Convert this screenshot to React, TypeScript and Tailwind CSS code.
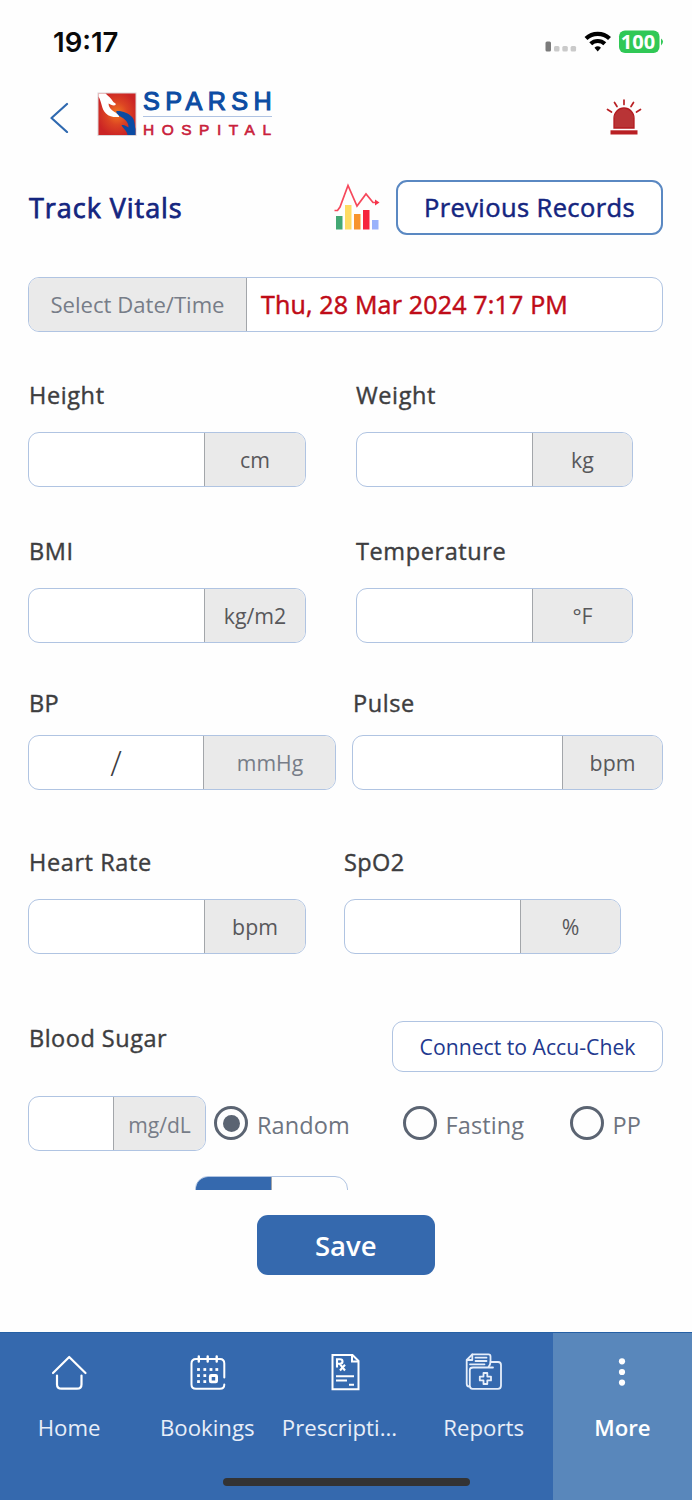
import type { ReactNode } from "react";

type VitalProps = {
  label: string;
  unit: string;
  className: string;
  unitClass: string;
  labelClass: string;
  children?: ReactNode;
};

function Vital({ label, unit, className, unitClass, labelClass, children }: VitalProps) {
  return (
    <div className={`flex flex-col ${className}`}>
      <label className={`flex items-center whitespace-nowrap text-[23.5px] text-[#3d3d3f] [-webkit-text-stroke:0.4px_#3d3d3f] ${labelClass}`}>
        {label}
      </label>
      <div className="flex h-[55px] overflow-hidden rounded-[11px] border-[1.5px] border-[#b0c4e2] bg-white">
        <div className="flex flex-1 items-center justify-center pt-0.5 text-[34px] font-light text-[#3d3d3f]">{children}</div>
        <div className={`flex items-center justify-center border-l-[1.5px] border-[#a3a6aa] bg-[#eaeaea] ${unitClass}`}>
          {unit}
        </div>
      </div>
    </div>
  );
}

function Radio({ label, checked, className }: { label: string; checked?: boolean; className: string }) {
  return (
    <div className={`flex h-full items-center ${className}`}>
      <span className="-mt-px flex size-[34px] shrink-0 items-center justify-center rounded-full border-[3.2px] border-[#5b6472]">
        {checked && <span className="size-[17px] rounded-full bg-[#5b6472]" />}
      </span>
      <span className="ml-[9px] whitespace-nowrap pt-1 text-[23.5px] tracking-[0.1px] text-[#6e7480]">{label}</span>
    </div>
  );
}

function Logo() {
  return (
    <div className="flex">
      <svg width="40" height="45" viewBox="0 0 40 45">
        <defs>
          <radialGradient id="glow" cx="0.5" cy="0.48" r="0.55">
            <stop offset="0" stopColor="#f27a22" />
            <stop offset="0.5" stopColor="#dc4423" />
            <stop offset="1" stopColor="#cb2425" />
          </radialGradient>
        </defs>
        <rect x="0.5" y="0.5" width="39" height="43.5" fill="#dcd6d8" />
        <rect x="1.5" y="1.5" width="37" height="41.5" fill="url(#glow)" />
        <path d="M1.500 1.500H8.500C11.500 4 14 6.500 16 9.500C17.500 11.500 19.500 11 18.500 13C16.500 14.500 13 12 11.500 11.500C11.500 15 14 18 17.500 20C20 21.500 22.800 23.500 22 25C17 25.500 12 24.500 9 21.500C4.500 17.500 5 10.500 1.500 4.500Z" fill="#fff" />
        <path d="M19.500 19C25 18.500 31.500 21 35 25C38 28.500 37.500 33 38.500 37V43H30.500C30 39 26.500 36.500 24.500 33.500C26.500 32 29.500 34.500 31.500 35.500C32 31 28 27 24 25C21.500 23.500 18.500 20.500 19.500 19Z" fill="#0b4ba3" />
      </svg>
      <div className="ml-1.5 flex w-[136px] flex-col font-['Liberation_Sans',sans-serif]">
        <span className="h-[24px] whitespace-nowrap text-[25.2px] leading-[19px] tracking-[5.4px] text-[#0c4ca3] [-webkit-text-stroke:1.1px_#0c4ca3]">SPARSH</span>
        <span className="h-px w-[129px] bg-[#b0c3e2]" />
        <span className="mt-[7px] whitespace-nowrap text-[15.5px] leading-[12px] tracking-[7.5px] text-[#c9203a] [-webkit-text-stroke:0.6px_#c9203a]">HOSPITAL</span>
      </div>
    </div>
  );
}

function StatusIcons() {
  return (
    <svg width="122" height="30" viewBox="542 27 122 30">
      <rect x="545.5" y="41.5" width="5.5" height="10" rx="1.5" fill="#7b7b7b" />
      <rect x="554" y="46" width="5.5" height="5.5" rx="1.5" fill="#cacaca" />
      <rect x="562.3" y="46" width="5.5" height="5.5" rx="1.5" fill="#cacaca" />
      <rect x="570.6" y="46" width="5.5" height="5.5" rx="1.5" fill="#cacaca" />
      <g fill="none" stroke="#000" strokeWidth="4.2">
        <path d="M586 38.500A17 17 0 0 1 609.500 38.500" />
        <path d="M590.700 43.800A10.300 10.300 0 0 1 604.800 43.800" />
      </g>
      <path d="M594.500 47.700Q597.700 45 601 47.700L597.700 51.500Z" fill="#000" />
      <rect x="619" y="30.5" width="40.5" height="22.5" rx="6" fill="#30c856" />
      <path d="M661 38.500Q665 41.500 661 45.500Z" fill="#30c856" />
      <text x="638" y="49" textAnchor="middle" className="font-['Open_Sans',sans-serif] text-[20px] font-bold" fill="#fff">100</text>
    </svg>
  );
}

function Siren() {
  return (
    <svg width="36" height="38" viewBox="0 0 36 38">
      <path d="M8 29V19A10 10 0 0 1 28 19V29Z" fill="#b93436" stroke="#b41b20" strokeWidth="1.3" />
      <rect x="4.5" y="31.3" width="27" height="4.2" fill="#b92024" />
      <g stroke="#b92024" strokeWidth="1.7" strokeLinecap="round">
        <path d="M18 1V5.500M8.500 3.500L11 7.500M27.500 3.500L25 7.500M1.500 10.500L5.500 13M34.500 10.500L30.500 13" />
      </g>
    </svg>
  );
}

function ChartIcon() {
  return (
    <svg width="46" height="48" viewBox="0 0 46 48">
      <rect x="2" y="34" width="6.5" height="13.5" fill="#43a874" />
      <rect x="11" y="23" width="6.5" height="24.5" fill="#fedb63" />
      <rect x="20" y="32" width="6.5" height="15.5" fill="#f7942d" />
      <rect x="29" y="28" width="6.5" height="19.5" fill="#f6243c" />
      <rect x="38" y="38" width="6.5" height="9.5" fill="#98b2fb" />
      <path d="M0.500 28.500H3.500L6 25L14 3.500L23 24L32 12L39 20.500H43" fill="none" stroke="#f6485b" strokeWidth="1.7" />
      <path d="M41 17.500L45.500 20.500L41 23.500Z" fill="#f6344a" />
    </svg>
  );
}

function HomeIcon() {
  return (
    <svg width="38" height="40" viewBox="50 1353 38 40" fill="none" stroke="#fff" strokeWidth="2.2" strokeLinecap="round" strokeLinejoin="round">
      <path d="M53 1373L69.200 1357L85.500 1373" />
      <path d="M57 1375.500V1384.500Q57 1388.700 61.500 1388.700H77Q81.500 1388.700 81.500 1384.500V1375.500" />
    </svg>
  );
}

const calendarDots = [
  [199, 1369.5], [205.3, 1369.5], [211.5, 1369.5], [217.3, 1369.5],
  [199, 1375.6], [205.3, 1375.6],
  [199, 1381.6], [205.3, 1381.6],
];

function BookingsIcon() {
  return (
    <svg width="38" height="40" viewBox="188.5 1353 38 40" fill="none" stroke="#fff" strokeWidth="2" strokeLinecap="round">
      <path d="M224.800 1377.500V1363.500Q224.800 1359 220.500 1359H196.500Q192 1359 192 1363.500V1384.500Q192 1388.800 196.500 1388.800H220.500Q224.800 1388.800 224.800 1384.500" />
      <path d="M199.300 1356.500V1361.500M208.200 1356.500V1361.500M217.200 1356.500V1361.500" strokeWidth="2.4" />
      {calendarDots.map(([x, y]) => (
        <rect key={`${x}-${y}`} x={x - 1.4} y={y - 1.4} width="2.8" height="2.8" fill="#fff" stroke="none" />
      ))}
      <rect x="210.8" y="1375.5" width="6.3" height="6.3" rx="0.8" strokeWidth="2.8" />
    </svg>
  );
}

function PrescriptionIcon() {
  return (
    <svg width="38" height="40" viewBox="326.5 1353 38 40" fill="none" stroke="#fff" strokeWidth="2">
      <path d="M333 1355H353L359 1361V1389.300H333Z" />
      <path d="M352.500 1355V1361.500H359" />
      <path d="M337.500 1367.500V1359.300H340.500Q343 1359.300 343 1361.500T340.500 1363.700H337.500M340 1363.700L345.500 1370.500M345.500 1364.800L340.500 1370.500" strokeWidth="2.1" />
      <path d="M336.500 1376.300H354.500M336.500 1380.500H347.500M349.500 1384.700H354.500" />
    </svg>
  );
}

function ReportsIcon() {
  return (
    <svg width="38" height="40" viewBox="465 1353 38 40" fill="none" stroke="#e6eefa" strokeWidth="1.8" strokeLinejoin="round" strokeLinecap="round">
      <path d="M469 1386.500Q466.700 1386.500 466.700 1383.500V1360L472.300 1354.300H488.500Q490.500 1354.300 490.500 1356.500V1362H498Q501 1362 501 1365V1385.500Q501 1388.800 498 1388.800H472.500Q469.800 1388.800 469.800 1385.500V1370Q469.800 1367.500 473 1367.500H493" />
      <path d="M490.500 1362Q490.500 1364.500 488.500 1367M472.300 1354.500V1360H467M475.500 1357.700H486.500M475.500 1361H486.500M470 1364.300H484.500" />
      <path d="M483.500 1373H487.300V1376.600H491V1380.400H487.300V1384H483.500V1380.400H479.800V1376.600H483.500Z" />
    </svg>
  );
}

function MoreIcon() {
  return (
    <svg width="38" height="40" viewBox="603 1353 38 40" fill="#fff">
      <circle cx="622" cy="1361.3" r="3.1" />
      <circle cx="622" cy="1372" r="3.1" />
      <circle cx="622" cy="1382.6" r="3.1" />
    </svg>
  );
}

const tabs = [
  { label: "Home", icon: <HomeIcon /> },
  { label: "Bookings", icon: <BookingsIcon /> },
  { label: "Prescripti...", icon: <PrescriptionIcon />, labelClass: "pr-[12px]" },
  { label: "Reports", icon: <ReportsIcon /> },
  { label: "More", icon: <MoreIcon />, active: true },
];

export default function App() {
  return (
    <div className="flex h-[1500px] w-[692px] flex-col overflow-hidden bg-[#fefefe] font-['Open_Sans',sans-serif]">
      <header className="flex h-[84px] shrink-0 items-center justify-between pl-[53px] pr-[28px]">
        <span className="pt-0.5 font-['Inter',sans-serif] text-[27.5px] font-semibold text-[#0a0a0a]">19:17</span>
        <StatusIcons />
      </header>

      <div className="flex h-[66px] shrink-0 items-center justify-between pl-[49px] pr-[50px]">
        <div className="flex items-center">
          <svg width="20" height="32" viewBox="0 0 20 32" fill="none" stroke="#2f69b0" strokeWidth="2.2" strokeLinecap="round" strokeLinejoin="round">
            <path d="M18 3L2.500 17L18 31" />
          </svg>
          <div className="ml-7 -mt-1.5">
            <Logo />
          </div>
        </div>
        <div className="pt-px">
          <Siren />
        </div>
      </div>

      <div className="mt-[30px] flex h-[55px] shrink-0 items-center pl-[29px] pr-[29px]">
        <h1 className="flex-1 pt-0.5 text-[27px] tracking-[0.95px] text-[#14257f] [-webkit-text-stroke:0.75px_#14257f]">Track Vitals</h1>
        <div className="pb-[3px]">
          <ChartIcon />
        </div>
        <button className="ml-4 h-[55px] w-[267px] rounded-[11px] border-2 border-[#5a88c2] bg-white text-[25.5px] tracking-[0.4px] text-[#14257f] [-webkit-text-stroke:0.5px_#14257f]">
          Previous Records
        </button>
      </div>

      <div className="ml-7 mt-[42px] flex h-[55px] w-[635px] shrink-0 overflow-hidden rounded-[11px] border-[1.5px] border-[#b0c4e2] bg-white">
        <div className="flex w-[218px] items-center justify-center border-r-[1.5px] border-[#a3a6aa] bg-[#eaeaea] text-[22.1px] text-[#777d88]">
          Select Date/Time
        </div>
        <div className="flex items-center pl-3.5 pt-px text-[25px] tracking-[0.18px] text-[#bf0b17] [-webkit-text-stroke:0.5px_#bf0b17]">Thu, 28 Mar 2024 7:17 PM</div>
      </div>

      <div className="flex shrink-0 pl-7">
        <Vital label="Height" unit="cm" className="w-[278px]" labelClass="ml-px mt-[44px] mb-4 h-10 tracking-[0.6px]" unitClass="w-[101px] text-[21.3px] text-[#58585b]" />
        <Vital label="Weight" unit="kg" className="ml-[50px] w-[277px]" labelClass="mt-[44px] mb-4 h-10 tracking-[0.6px]" unitClass="w-[100px] text-[21.3px] text-[#58585b]" />
      </div>
      <div className="flex shrink-0 pl-7">
        <Vital label="BMI" unit="kg/m2" className="w-[278px]" labelClass="ml-px mt-[45px] mb-4 h-10 tracking-[0.6px]" unitClass="w-[101px] text-[21.3px] text-[#58585b]" />
        <Vital label="Temperature" unit="°F" className="ml-[50px] w-[277px]" labelClass="mt-[45px] mb-4 h-10 tracking-[0.6px]" unitClass="w-[100px] text-[21.3px] text-[#58585b]" />
      </div>
      <div className="flex shrink-0 pl-7">
        <Vital label="BP" unit="mmHg" className="w-[308px]" labelClass="ml-px mt-[41px] mb-[11px] h-10 tracking-[0.3px]" unitClass="w-[132px] pl-px text-[21.2px] text-[#777d88]">
          /
        </Vital>
        <Vital label="Pulse" unit="bpm" className="ml-4 w-[311px]" labelClass="ml-px mt-[41px] mb-[11px] h-10 tracking-[0.6px]" unitClass="w-[100px] text-[21.3px] text-[#58585b]" />
      </div>
      <div className="flex shrink-0 pl-7">
        <Vital label="Heart Rate" unit="bpm" className="w-[278px]" labelClass="ml-px mt-[53px] mb-4 h-10 tracking-[0.6px]" unitClass="w-[101px] text-[21.3px] text-[#58585b]" />
        <Vital label="SpO2" unit="%" className="ml-[38px] w-[277px]" labelClass="mt-[53px] mb-4 h-10 tracking-[0.4px]" unitClass="w-[100px] text-[21.3px] text-[#58585b]" />
      </div>

      <div className="mt-[67px] flex h-[51px] shrink-0 justify-between pl-[29px] pr-[29px]">
        <span className="text-[23.5px] leading-[34px] tracking-[0.5px] text-[#3d3d3f] [-webkit-text-stroke:0.4px_#3d3d3f]">Blood Sugar</span>
        <button className="h-[51px] w-[271px] rounded-[11px] border-[1.5px] border-[#b0c4e2] bg-white text-[21.2px] text-[#22388e]">
          Connect to Accu-Chek
        </button>
      </div>

      <div className="mt-6 flex h-[55px] shrink-0 pl-7">
        <div className="flex h-[55px] w-[178px] overflow-hidden rounded-[11px] border-[1.5px] border-[#b0c4e2] bg-white">
          <div className="flex-1" />
          <div className="flex w-[92px] items-center justify-center border-l-[1.5px] border-[#a3a6aa] bg-[#eaeaea] pt-0.5 text-[21.1px] text-[#777d88]">mg/dL</div>
        </div>
        <Radio label="Random" checked className="ml-2 w-[188.5px]" />
        <Radio label="Fasting" className="w-[167px]" />
        <Radio label="PP" className="" />
      </div>

      <div className="mt-[25px] h-3.5 shrink-0 overflow-hidden pl-[195px]">
        <div className="flex h-14 w-[153px] overflow-hidden rounded-[13px] border-[1.5px] border-[#b0c4e2]">
          <div className="w-[76px] border-r-[1.5px] border-[#a3a6aa] bg-[#3569ae]" />
        </div>
      </div>

      <button className="ml-[256.5px] mt-[25px] h-[60px] w-[178.5px] shrink-0 rounded-[11px] bg-[#3569ae] pt-0.5 text-[27.5px] font-semibold text-white">
        Save
      </button>

      <nav className="relative mt-[57px] flex h-[168px] shrink-0 border-t border-[#2560a5] bg-[#3569ae]">
        {tabs.map((tab) => (
          <div
            key={tab.label}
            className={
              tab.active
                ? "flex flex-1 flex-col items-center bg-[#5987bb] pt-5 text-[22.2px] font-semibold text-white"
                : "flex w-[138.2px] flex-col items-center pt-5 text-[22.2px] text-[#e8eef8]"
            }
          >
            {tab.icon}
            <span className={`mt-[18px] whitespace-nowrap leading-[34px] ${tab.labelClass ?? ""}`}>{tab.label}</span>
          </div>
        ))}
        <span className="absolute bottom-[14px] left-[222.5px] h-2 w-[247px] rounded-full bg-[#333334]" />
      </nav>
    </div>
  );
}
